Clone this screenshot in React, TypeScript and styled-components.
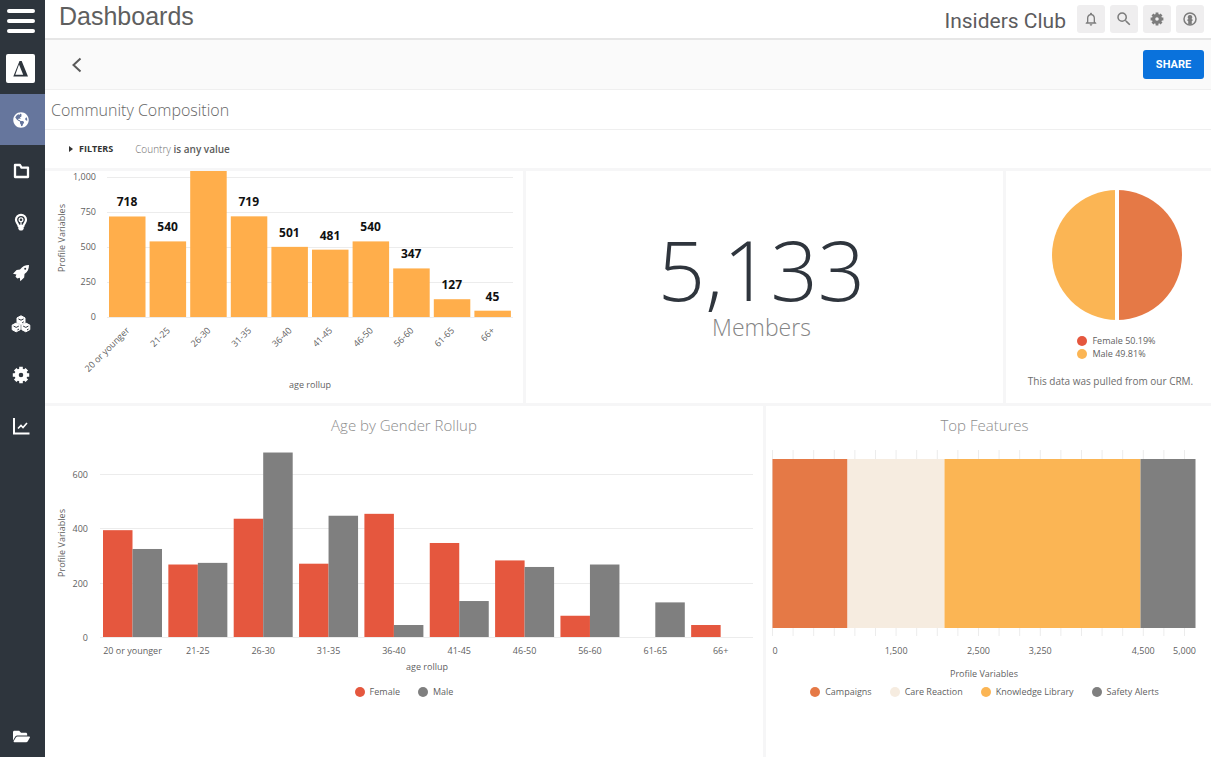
import React from 'react';
import styled, { createGlobalStyle } from 'styled-components';
import { FaFolderOpen, FaGlobeAmericas } from 'react-icons/fa';
import { MdNotificationsNone, MdSearch } from 'react-icons/md';

const sans = '"Open Sans", "Noto Sans", sans-serif';

const color = {
  ink: '#2f353d',
  rail: '#2e353d',
  railActive: '#66769d',
  divider: '#f6f6f7',
  grid: '#ececec',
  axis: '#5f5f5f',
  amber: '#ffae4b',
  amberSoft: '#fbb554',
  orange: '#e57946',
  red: '#e5573e',
  cream: '#f6ece0',
  gray: '#7f7f7f',
};

const GlobalStyle = createGlobalStyle`
  *, *::before, *::after { box-sizing: border-box; }
  body {
    margin: 0;
    background: #fff;
    color: ${color.ink};
    font-family: ${sans};
    font-size: 10px;
  }
  h1, h2, h3, p, ul { margin: 0; padding: 0; font-weight: inherit; }
  ul { list-style: none; }
  button { border: 0; padding: 0; background: none; color: inherit; font: inherit; cursor: pointer; }
`;

/* ---------- Shell ---------- */

const Shell = styled.div`
  display: flex;
  min-height: 100vh;
`;

const Rail = styled.nav`
  flex: none;
  display: flex;
  flex-direction: column;
  width: 45px;
  background: ${color.rail};
  color: #fff;
`;

const MenuButton = styled.button`
  display: flex;
  flex-direction: column;
  justify-content: center;
  gap: 6px;
  height: 42px;
  padding: 0 10px 0 7px;
`;

const MenuBar = styled.span`
  height: 4px;
  border-radius: 2px;
  background: #fff;
`;

const LogoLink = styled.a`
  display: flex;
  justify-content: center;
  align-items: center;
  height: 52px;
  padding-right: 5px;
`;

const NavLink = styled.a<{ $active?: boolean }>`
  display: flex;
  justify-content: center;
  align-items: center;
  height: 51px;
  padding-right: 3px;
  color: #fff;
  background: ${p => (p.$active ? color.railActive : 'transparent')};
`;

const RailFoot = styled.div`
  margin-top: auto;
  padding-bottom: 3px;
  & > a { height: 36px; }
`;

const Main = styled.main`
  flex: 1;
  min-width: 0;
  display: flex;
  flex-direction: column;
`;

/* ---------- Header ---------- */

const Header = styled.header`
  display: flex;
  justify-content: space-between;
  height: 40px;
  padding: 0 7px 0 14px;
  border-bottom: 2px solid #e6e6e6;
`;

const PageTitle = styled.h1`
  color: #5f5f5f;
  font: 400 25px/32px "Liberation Sans", Arial, sans-serif;
`;

const Account = styled.div`
  display: flex;
  align-items: center;
  gap: 5px;
`;

const ClubName = styled.span`
  margin-right: 6px;
  padding-top: 3px;
  color: #5c5c5e;
  font: 400 21px/28px Roboto, sans-serif;
`;

const IconButton = styled.button`
  display: flex;
  justify-content: center;
  align-items: center;
  width: 28px;
  height: 28px;
  border-radius: 3px;
  background: #efeeef;
  color: #7c7c7c;
`;

const Toolbar = styled.div`
  display: flex;
  justify-content: space-between;
  align-items: center;
  height: 50px;
  padding: 0 7px 0 24px;
  border-bottom: 1px solid #efefef;
  background: #fafafa;
`;

const BackButton = styled.button`
  display: flex;
  color: #5a5a5a;
`;

const ShareButton = styled.button`
  width: 61px;
  height: 29px;
  border-radius: 3px;
  background: #0a72dc;
  color: #fff;
  font: 700 11px/28px Roboto, sans-serif;
`;

const DashboardTitle = styled.h2`
  height: 40px;
  padding-left: 6px;
  border-bottom: 1px solid #efefef;
  color: #666;
  font-size: 16px;
  font-weight: 300;
  line-height: 40px;
`;

const Filters = styled.div`
  display: flex;
  align-items: center;
  gap: 22px;
  height: 38px;
  padding-left: 24px;
  color: #6c6c6c;
  line-height: 14px;
`;

const FilterToggle = styled.button`
  display: flex;
  align-items: center;
  gap: 6px;
  color: #333;
  font-size: 9px;
  font-weight: 700;
`;

const FilterText = styled.p`
  font-size: 10px;
  font-weight: 300;
  b { font-weight: 600; color: #5c5c5c; }
`;

/* ---------- Panels ---------- */

const Board = styled.div`
  flex: 1;
  display: flex;
  flex-direction: column;
  gap: 3px;
  padding-top: 3px;
  background: ${color.divider};
`;

const PanelRow = styled.div<{ $columns: string; $grow?: boolean }>`
  display: grid;
  grid-template-columns: ${p => p.$columns};
  gap: 3px;
  flex-grow: ${p => (p.$grow ? 1 : 0)};
`;

const Panel = styled.section<{ $inset?: number }>`
  display: flex;
  flex-direction: column;
  min-width: 0;
  padding-right: ${p => p.$inset ?? 0}px;
  background: #fff;
`;

const PanelTitle = styled.h3`
  padding-top: 8px;
  color: #8c8c8c;
  font-size: 15px;
  font-weight: 300;
  line-height: 22px;
  text-align: center;
`;

const Chart = styled.svg`
  display: block;
  width: 100%;
  height: auto;
  font-family: ${sans};
  font-size: 9px;
  fill: ${color.axis};
`;

const Metric = styled(Panel)`
  justify-content: center;
  align-items: center;
  padding: 0 6px 8px 0;
`;

const MetricValue = styled.p`
  color: ${color.ink};
  font-size: 83px;
  font-weight: 300;
  line-height: 88px;
`;

const MetricLabel = styled.p`
  color: #858585;
  font-size: 23px;
  font-weight: 300;
  line-height: 28px;
`;

const PiePanel = styled(Panel)`
  align-items: center;
  padding: 19px 0 0 4px;
`;

const PieFigure = styled.div`
  display: flex;
  flex-direction: column;
  align-items: center;
  gap: 10px;
  padding-left: 12px;
`;

const Legend = styled.ul<{ $column?: boolean }>`
  display: flex;
  flex-direction: ${p => (p.$column ? 'column' : 'row')};
  justify-content: center;
  gap: ${p => (p.$column ? 0 : 18)}px;
  padding-top: 4px;
  color: ${color.axis};
  font-size: 9px;
  line-height: 13px;
`;

const LegendItem = styled.li<{ $color: string }>`
  display: flex;
  align-items: center;
  gap: 5px;
  &::before {
    content: '';
    width: 10px;
    height: 10px;
    border-radius: 50%;
    background: ${p => p.$color};
  }
`;

const PieNote = styled.p`
  padding-top: 14px;
  color: #6d6d6d;
  font-size: 10px;
  line-height: 14px;
`;

/* ---------- Icons ---------- */

const LogoMark = () => (
  <svg width="29" height="29" viewBox="0 0 29 29" aria-hidden="true">
    <rect width="29" height="29" rx="2" fill="#fff" />
    <path d="M13.500 7h2.200l6.300 15.500H7.300zM13 10.500 9.300 20.800h7.900z" fill="#2e353d" fillRule="evenodd" />
  </svg>
);

const FolderIcon = () => (
  <svg width="17" height="16" viewBox="0 0 17 16" fill="none" stroke="currentColor" strokeWidth="2.300" strokeLinejoin="round" aria-hidden="true">
    <path d="M2 2h5l1.500 2.600H15V14H2z" />
  </svg>
);

const BulbIcon = () => (
  <svg width="14" height="18" viewBox="0 0 14 18" aria-hidden="true">
    <path d="M7 1.800a5 5 0 0 0-5 5c0 2.400 2 3.500 2.600 6h4.800c.6-2.500 2.600-3.600 2.600-6a5 5 0 0 0-5-5z" fill="none" stroke="currentColor" strokeWidth="2.200" />
    <path d="M4.300 12.500h5.400V16L8.300 17.500H5.700L4.300 16z" fill="currentColor" />
    <circle cx="7" cy="6.800" r="1.900" fill="none" stroke="currentColor" strokeWidth="1.200" />
    <path d="M7 8.500v4" stroke="currentColor" strokeWidth="1.200" />
  </svg>
);

const RocketIcon = () => (
  <svg width="18" height="18" viewBox="0 0 18 18" aria-hidden="true">
    <path d="M17 1c-4 0-6.500 1.300-9 4.600L4.600 6 1 9.800l3.400.6-.9 2.400L5.300 14.600l2.500-.9.500 3.500 3.900-3.600.3-3.500C15.700 7.600 17 5.200 17 1z" fill="currentColor" />
    <circle cx="13.200" cy="4.800" r="1" fill={color.rail} />
  </svg>
);

const hexCenters = [[10, 5.2], [5.2, 12.4], [14.8, 12.4]];

const ModulesIcon = () => (
  <svg width="20" height="18" viewBox="0 0 20 18" aria-hidden="true">
    {hexCenters.map(([x, y]) => (
      <g key={`${x}-${y}`} transform={`translate(${x} ${y})`}>
        <path d="M0-4.400 4-2.300V2.300L0 4.400-4 2.300v-4.600z" fill="currentColor" stroke="currentColor" strokeWidth="1" strokeLinejoin="round" />
        <path d="M-2.600-1.300 0 0l2.600-1.300M1.200 2.500l1.600-.9" fill="none" stroke={color.rail} strokeWidth="1" />
      </g>
    ))}
  </svg>
);

const GearIcon = ({ size }: { size: number }) => (
  <svg width={size} height={size} viewBox="0 0 18 18" aria-hidden="true">
    <circle cx="9" cy="9" r="4.400" fill="none" stroke="currentColor" strokeWidth="4.200" />
    {[0, 45, 90, 135].map(angle => (
      <path key={angle} d="M7.200.8h3.600V4H7.200zM7.200 14h3.600v3.200H7.200z" transform={`rotate(${angle} 9 9)`} fill="currentColor" />
    ))}
  </svg>
);

const TrendIcon = () => (
  <svg width="18" height="18" viewBox="0 0 18 18" fill="none" stroke="currentColor" aria-hidden="true">
    <path d="M2 1v15.500h15.500" strokeWidth="2" />
    <path d="m6 11.500 3-3 2 2 4-4.500" strokeWidth="1.600" />
  </svg>
);

const ProfileIcon = () => (
  <svg width="14" height="14" viewBox="0 0 14 14" aria-hidden="true">
    <circle cx="7" cy="7" r="6" fill="none" stroke="currentColor" strokeWidth="1.500" />
    <path d="M7 3a2.200 2.200 0 0 1 1.500 3.900c.8.300 1.300.8 1.300 1.500L8.800 9v3.500H5.200V9l-1-.6c0-.7.500-1.200 1.300-1.500A2.200 2.200 0 0 1 7 3z" fill="currentColor" />
  </svg>
);

const ChevronLeft = () => (
  <svg width="16" height="16" viewBox="0 0 16 16" fill="none" stroke="currentColor" strokeWidth="2" aria-hidden="true">
    <path d="M11.500 1.500 4.500 8l7 6.500" />
  </svg>
);

const Caret = () => (
  <svg width="4" height="6" viewBox="0 0 4 6" aria-hidden="true">
    <path d="M0 0l4 3-4 3z" fill="currentColor" />
  </svg>
);

const navItems = [
  { label: 'Community', icon: <FaGlobeAmericas size={16} />, active: true },
  { label: 'Folders', icon: <FolderIcon /> },
  { label: 'Ideas', icon: <BulbIcon /> },
  { label: 'Launch', icon: <RocketIcon /> },
  { label: 'Modules', icon: <ModulesIcon /> },
  { label: 'Settings', icon: <GearIcon size={18} /> },
  { label: 'Reports', icon: <TrendIcon /> },
];

/* ---------- Charts ---------- */

const ages = ['20 or younger', '21-25', '26-30', '31-35', '36-40', '41-45', '46-50', '56-60', '61-65', '66+'];
const ageTotals = [718, 540, 1111, 719, 501, 481, 540, 347, 127, 45];
const femaleByAge = [392, 266, 434, 269, 452, 345, 281, 78, 0, 44];
const maleByAge = [323, 272, 677, 445, 44, 132, 257, 266, 127, 0];

function AgeChart() {
  const base = 146;
  const scale = 0.14;
  const pitch = 40.6;
  return (
    <Chart viewBox="0 0 478 232" role="img" aria-label="Profile variables by age rollup">
      {[0, 250, 500, 750, 1000].map(tick => (
        <g key={tick}>
          <path d={`M62 ${base - tick * scale + 0.5}H468`} stroke={color.grid} />
          <text x="51" y={base - tick * scale + 3} textAnchor="end">{tick.toLocaleString('en-US')}</text>
        </g>
      ))}
      {ageTotals.map((total, i) => {
        const x = 64 + i * pitch;
        const top = Math.max(0, base - total * scale);
        return (
          <g key={ages[i]}>
            <rect x={x} y={top} width="36.500" height={base - top} fill={color.amber} />
            {top > 0 && (
              <text x={x + 18} y={top - 10} textAnchor="middle" fontSize="12" fontWeight="700" fill="#111">{total}</text>
            )}
            <text transform={`translate(${x + 21} 160) rotate(-45)`} textAnchor="end">{ages[i]}</text>
          </g>
        );
      })}
      <text transform="translate(20 67) rotate(-90)" textAnchor="middle">Profile Variables</text>
      <text x="265" y="217" textAnchor="middle">age rollup</text>
    </Chart>
  );
}

function GenderChart() {
  const base = 201;
  const scale = 0.2725;
  const pitch = 65.35;
  return (
    <Chart viewBox="0 0 718 245" role="img" aria-label="Age by gender">
      {[0, 200, 400, 600].map(tick => (
        <g key={tick}>
          <path d={`M55 ${Math.round(base - tick * scale) + 0.5}H708`} stroke={color.grid} />
          <text x="43" y={base - tick * scale + 4} textAnchor="end">{tick}</text>
        </g>
      ))}
      {ages.map((age, i) => {
        const x = 58 + i * pitch;
        const female = femaleByAge[i] * scale;
        const male = maleByAge[i] * scale;
        return (
          <g key={age}>
            <rect x={x} y={base - female} width="29.500" height={female} fill={color.red} />
            <rect x={x + 29.5} y={base - male} width="29.500" height={male} fill={color.gray} />
            <text x={x + 29.5} y="218" textAnchor="middle">{age}</text>
          </g>
        );
      })}
      <text transform="translate(20 107) rotate(-90)" textAnchor="middle">Profile Variables</text>
      <text x="382" y="234" textAnchor="middle">age rollup</text>
    </Chart>
  );
}

const features = [
  { name: 'Campaigns', from: 0, to: 75, color: color.orange },
  { name: 'Care Reaction', from: 75, to: 172, color: color.cream },
  { name: 'Knowledge Library', from: 172, to: 368, color: color.amberSoft },
  { name: 'Safety Alerts', from: 368, to: 423, color: color.gray },
];

function FeatureChart() {
  const left = 6.5;
  const scale = 0.0824;
  return (
    <Chart viewBox="0 0 437 245" role="img" aria-label="Top features">
      {Array.from({ length: 21 }, (_, i) => (
        <path key={i} d={`M${left + i * 250 * scale} 14v186`} stroke={color.grid} />
      ))}
      {features.map(f => (
        <rect key={f.name} x={left + f.from} y="23" width={f.to - f.from} height="169" fill={f.color} />
      ))}
      <text x={left} y="218">0</text>
      {[1500, 2500, 3250, 4500, 5000].map(tick => (
        <text key={tick} x={left + tick * scale} y="218" textAnchor="middle">{tick.toLocaleString('en-US')}</text>
      ))}
      <text x="218" y="241" textAnchor="middle">Profile Variables</text>
    </Chart>
  );
}

const GenderPie = () => (
  <svg width="130" height="130" viewBox="0 0 130 130" role="img" aria-label="Female 50.19%, Male 49.81%">
    <path d="M65 0a65 65 0 0 0 0 130z" fill={color.amberSoft} />
    <path d="M65 0a65 65 0 0 1 0 130z" fill={color.orange} />
    <path d="M65 0v130" stroke="#fff" strokeWidth="4" />
  </svg>
);

/* ---------- Page ---------- */

export default function App() {
  return (
    <Shell>
      <GlobalStyle />
      <Rail aria-label="Main">
        <MenuButton aria-label="Menu"><MenuBar /><MenuBar /><MenuBar /></MenuButton>
        <LogoLink href="#home" aria-label="Home"><LogoMark /></LogoLink>
        {navItems.map(item => (
          <NavLink key={item.label} href="#" aria-label={item.label} $active={item.active}>{item.icon}</NavLink>
        ))}
        <RailFoot>
          <NavLink href="#files" aria-label="Files"><FaFolderOpen size={17} /></NavLink>
        </RailFoot>
      </Rail>

      <Main>
        <Header>
          <PageTitle>Dashboards</PageTitle>
          <Account>
            <ClubName>Insiders Club</ClubName>
            <IconButton aria-label="Notifications"><MdNotificationsNone size={16} /></IconButton>
            <IconButton aria-label="Search"><MdSearch size={18} /></IconButton>
            <IconButton aria-label="Settings"><GearIcon size={14} /></IconButton>
            <IconButton aria-label="Profile"><ProfileIcon /></IconButton>
          </Account>
        </Header>
        <Toolbar>
          <BackButton aria-label="Back"><ChevronLeft /></BackButton>
          <ShareButton>SHARE</ShareButton>
        </Toolbar>
        <DashboardTitle>Community Composition</DashboardTitle>
        <Filters>
          <FilterToggle><Caret />FILTERS</FilterToggle>
          <FilterText>Country <b>is any value</b></FilterText>
        </Filters>

        <Board>
          <PanelRow $columns="478fr 477fr 205fr">
            <Panel><AgeChart /></Panel>
            <Metric>
              <MetricValue>5,133</MetricValue>
              <MetricLabel>Members</MetricLabel>
            </Metric>
            <PiePanel>
              <PieFigure>
                <GenderPie />
                <Legend $column>
                  <LegendItem $color={color.red}>Female 50.19%</LegendItem>
                  <LegendItem $color={color.amberSoft}>Male 49.81%</LegendItem>
                </Legend>
              </PieFigure>
              <PieNote>This data was pulled from our CRM.</PieNote>
            </PiePanel>
          </PanelRow>
          <PanelRow $columns="718fr 445fr" $grow>
            <Panel>
              <PanelTitle>Age by Gender Rollup</PanelTitle>
              <GenderChart />
              <Legend>
                <LegendItem $color={color.red}>Female</LegendItem>
                <LegendItem $color={color.gray}>Male</LegendItem>
              </Legend>
            </Panel>
            <Panel $inset={8}>
              <PanelTitle>Top Features</PanelTitle>
              <FeatureChart />
              <Legend>
                {features.map(f => <LegendItem key={f.name} $color={f.color}>{f.name}</LegendItem>)}
              </Legend>
            </Panel>
          </PanelRow>
        </Board>
      </Main>
    </Shell>
  );
}
